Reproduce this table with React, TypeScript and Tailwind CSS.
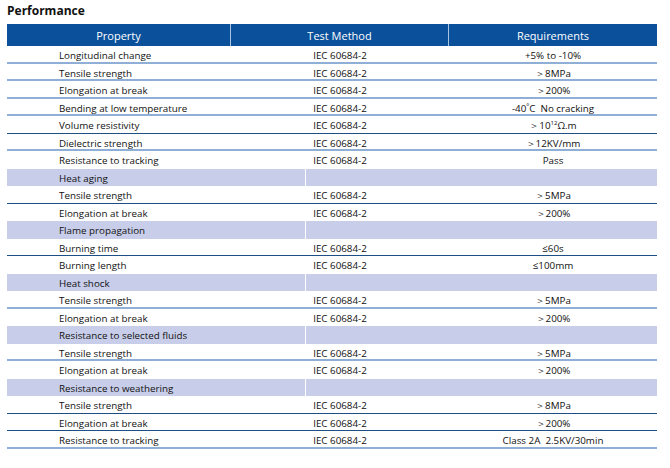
import React from "react";

type Row =
  | { kind: "data"; p: string; m: string; r: React.ReactNode; line: "light" | "dark" | "none" }
  | { kind: "band"; p: string };

const GT = "＞";

const rows: Row[] = [
  { kind: "data", p: "Longitudinal change", m: "IEC 60684-2", r: "+5% to -10%", line: "light" },
  { kind: "data", p: "Tensile strength", m: "IEC 60684-2", r: GT + "8MPa", line: "light" },
  { kind: "data", p: "Elongation at break", m: "IEC 60684-2", r: GT + "200%", line: "light" },
  { kind: "data", p: "Bending at low temperature", m: "IEC 60684-2", r: <span className="whitespace-pre">-40<span className="text-[7px] relative -top-[3px]">°</span>C  No cracking</span>, line: "light" },
  { kind: "data", p: "Volume resistivity", m: "IEC 60684-2", r: <span>{GT}10<span className="text-[6px] relative -top-[4px]">12</span>Ω.m</span>, line: "dark" },
  { kind: "data", p: "Dielectric strength", m: "IEC 60684-2", r: GT + "12KV/mm", line: "light" },
  { kind: "data", p: "Resistance to tracking", m: "IEC 60684-2", r: "Pass", line: "none" },
  { kind: "band", p: "Heat aging" },
  { kind: "data", p: "Tensile strength", m: "IEC 60684-2", r: GT + "5MPa", line: "dark" },
  { kind: "data", p: "Elongation at break", m: "IEC 60684-2", r: GT + "200%", line: "none" },
  { kind: "band", p: "Flame propagation" },
  { kind: "data", p: "Burning time", m: "IEC 60684-2", r: "≤60s", line: "dark" },
  { kind: "data", p: "Burning length", m: "IEC 60684-2", r: "≤100mm", line: "none" },
  { kind: "band", p: "Heat shock" },
  { kind: "data", p: "Tensile strength", m: "IEC 60684-2", r: GT + "5MPa", line: "light" },
  { kind: "data", p: "Elongation at break", m: "IEC 60684-2", r: GT + "200%", line: "none" },
  { kind: "band", p: "Resistance to selected fluids" },
  { kind: "data", p: "Tensile strength", m: "IEC 60684-2", r: GT + "5MPa", line: "light" },
  { kind: "data", p: "Elongation at break", m: "IEC 60684-2", r: GT + "200%", line: "none" },
  { kind: "band", p: "Resistance to weathering" },
  { kind: "data", p: "Tensile strength", m: "IEC 60684-2", r: GT + "8MPa", line: "dark" },
  { kind: "data", p: "Elongation at break", m: "IEC 60684-2", r: GT + "200%", line: "dark" },
  { kind: "data", p: "Resistance to tracking", m: "IEC 60684-2", r: <span className="whitespace-pre">Class 2A  2.5KV/30min</span>, line: "light" },
];

export default function App() {
  return (
    <div
      className="w-[670px] h-[468px] bg-white text-[#111111] pl-[7px]"
      style={{ fontFamily: '"Open Sans", "Noto Sans", sans-serif' }}
    >
      <div className="h-[24px] pt-[3px] text-[12px] leading-[16px] font-bold">Performance</div>
      <div className="w-[650px]">
        <div className="grid grid-cols-[224px_218px_208px] h-[22px] bg-[#0a509b] text-white text-[11px]">
          <div className="flex items-center justify-center pt-[2px] border-r border-[#a9c3e2]">Property</div>
          <div className="flex items-center justify-center pt-[2px] border-r border-[#a9c3e2]">Test Method</div>
          <div className="flex items-center justify-center pt-[2px]">Requirements</div>
        </div>
        {rows.map((row, i) =>
          row.kind === "band" ? (
            <div key={i} className="grid grid-cols-[299px_351px] h-[17.5px] text-[9.8px]">
              <div className="flex items-center pt-[3px] pl-[52px] bg-[#c8cde9] border-r border-white">{row.p}</div>
              <div className="bg-[#c8cde9]" />
            </div>
          ) : (
            <div
              key={i}
              className={
                "grid grid-cols-[224px_218px_208px] h-[17.5px] text-[9.8px] " +
                (row.line === "light"
                  ? "border-b-2 border-[#8fafd6]"
                  : row.line === "dark"
                  ? "border-b border-[#1d4f86]"
                  : "")
              }
            >
              <div className="flex items-center pt-[3px] pl-[52px]">{row.p}</div>
              <div className="flex items-center justify-center pt-[3px]">{row.m}</div>
              <div className="flex items-center justify-center pt-[3px]">{row.r}</div>
            </div>
          )
        )}
      </div>
    </div>
  );
}
